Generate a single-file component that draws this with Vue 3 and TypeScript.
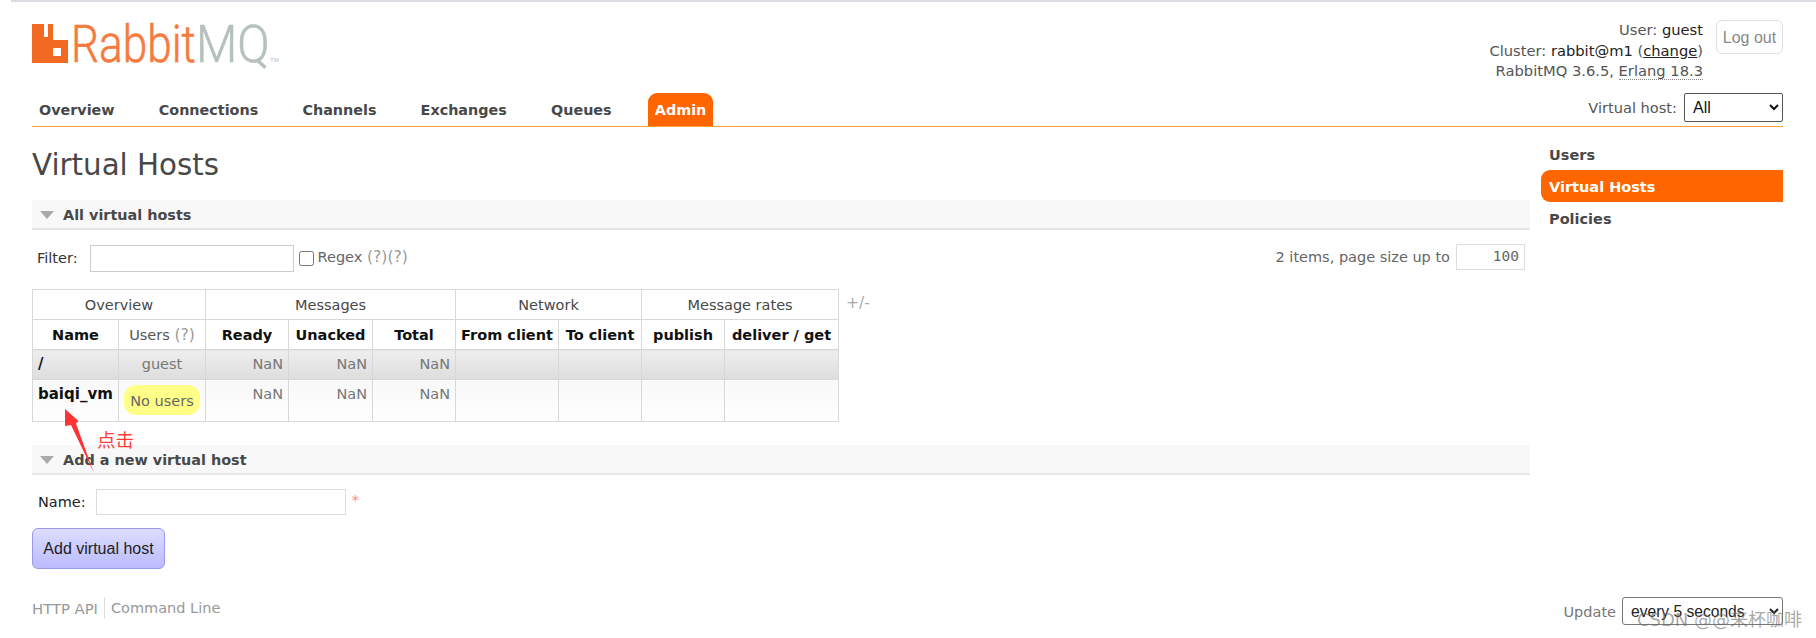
<script setup lang="ts">
const navItems = ['Overview', 'Connections', 'Channels', 'Exchanges', 'Queues', 'Admin']
const groups = [
  { label: 'Overview', span: 2 },
  { label: 'Messages', span: 3 },
  { label: 'Network', span: 2 },
  { label: 'Message rates', span: 2 },
]
const colWidths = [86, 87, 83, 84, 83, 103, 83, 83, 114]
const rows = [
  { name: '/', cls: 'alt1' },
  { name: 'baiqi_vm', cls: 'alt2' },
]
</script>

<template>
  <div class="page">
    <div class="topline"></div>
    <header class="header">
      <div class="logo">
        <svg class="logo-icon" width="36" height="39" viewBox="0 0 36 39">
          <path fill="#f26a22" fill-rule="evenodd" d="M0 0h12v13h4V0h5v16h15v23H0zM21 24v8h8v-8z" />
        </svg>
        <svg class="logo-text" width="206" height="60" viewBox="0 0 206 60">
          <text class="lt rabbit" transform="translate(-4 46) scale(.8 1)" textLength="156" lengthAdjust="spacingAndGlyphs">Rabbit</text>
          <text class="lt mq" transform="translate(121 46) scale(.8 1)" textLength="92" lengthAdjust="spacingAndGlyphs">MQ</text>
          <text x="195" y="46" class="tm">TM</text>
        </svg>
      </div>
      <div class="login">
        <div class="login-text">
          <div>User: <b>guest</b></div>
          <div>Cluster: <b>rabbit@m1</b> (<a class="change">change</a>)</div>
          <div>RabbitMQ 3.6.5, <span class="erlang">Erlang 18.3</span></div>
        </div>
        <button class="logout">Log out</button>
      </div>
    </header>

    <nav class="nav">
      <a v-for="item in navItems" :key="item" class="tab" :class="{ active: item === 'Admin' }">{{ item }}</a>
      <div class="vhost">
        <label>Virtual host:</label>
        <select class="vhost-select"><option>All</option></select>
      </div>
    </nav>

    <div class="body">
      <main class="main">
        <h1>Virtual Hosts</h1>
        <section>
          <h2 class="sec"><i class="tri"></i>All virtual hosts</h2>
          <div class="filter">
            <div class="filter-left">
              <label class="flabel">Filter:</label>
              <input class="finput" type="text" />
              <input class="cb" type="checkbox" />
              <span class="regex">Regex <span class="help">(?)(?)</span></span>
            </div>
            <div class="filter-right">
              <span>2 items, page size up to</span>
              <input class="psize" type="text" value="100" />
            </div>
          </div>
          <div class="table-wrap">
            <table class="list">
              <colgroup>
                <col v-for="(w, i) in colWidths" :key="i" :style="{ width: w + 'px' }" />
              </colgroup>
              <thead>
                <tr class="grp">
                  <th v-for="g in groups" :key="g.label" :colspan="g.span">{{ g.label }}</th>
                </tr>
                <tr class="cols">
                  <th>Name</th>
                  <th class="plain">Users <span class="help">(?)</span></th>
                  <th>Ready</th>
                  <th>Unacked</th>
                  <th>Total</th>
                  <th>From client</th>
                  <th>To client</th>
                  <th>publish</th>
                  <th>deliver / get</th>
                </tr>
              </thead>
              <tbody>
                <tr v-for="r in rows" :key="r.name" :class="r.cls">
                  <td class="name">{{ r.name }}</td>
                  <td class="users">
                    <span v-if="r.cls === 'alt1'">guest</span>
                    <span v-else class="nousers">No users</span>
                  </td>
                  <td class="num">NaN</td>
                  <td class="num">NaN</td>
                  <td class="num">NaN</td>
                  <td></td>
                  <td></td>
                  <td></td>
                  <td></td>
                </tr>
              </tbody>
            </table>
            <span class="plusminus">+/-</span>
          </div>
        </section>

        <section class="add">
          <h2 class="sec"><i class="tri"></i>Add a new virtual host</h2>
          <div class="name-row">
            <label class="nlabel">Name:</label>
            <input class="ninput" type="text" />
            <span class="req">*</span>
          </div>
          <button class="addbtn">Add virtual host</button>
        </section>
      </main>

      <aside class="side">
        <a class="side-item">Users</a>
        <a class="side-item on">Virtual Hosts</a>
        <a class="side-item">Policies</a>
      </aside>
    </div>

    <footer class="footer">
      <div class="links">
        <a class="flink">HTTP API</a>
        <a class="flink sep">Command Line</a>
      </div>
      <div class="update">
        <label>Update</label>
        <select class="upd-select"><option>every 5 seconds</option></select>
      </div>
    </footer>

    <svg class="arrow" width="40" height="70" viewBox="0 0 40 70">
      <path fill="#ff3333" d="M1 2 L14.5 14 L12 16.5 L29.5 65 L7 18 L1 19 Z" />
    </svg>
    <span class="note">点击</span>
    <span class="watermark">CSDN @@来杯咖啡</span>
  </div>
</template>

<style>
html, body { margin: 0; background: #fff; }
</style>

<style scoped>
.page {
  position: relative;
  width: 1816px;
  height: 638px;
  overflow: hidden;
  background: #fff;
  font: 14.5px "DejaVu Sans", Verdana, sans-serif;
  color: #484848;
}
.topline { height: 2px; margin-left: 11px; background: #dcdce4; }
.header {
  display: flex;
  justify-content: space-between;
  height: 91px;
  padding: 0 33px 0 32px;
}
.logo { display: flex; align-items: flex-start; padding-top: 22px; height: 46px; }
.logo-icon { display: block; }
.logo-text { display: block; margin-left: 7px; margin-top: -8px; overflow: visible; }
.lt { font-family: Roboto, sans-serif; font-size: 52px; font-weight: 300; stroke-width: 0.6px; }
.rabbit { fill: #f47b3c; stroke: #f47b3c; }
.mq { fill: #b4c1bc; stroke: #b4c1bc; }
.tm { font: 6px "Liberation Sans", sans-serif; fill: #b5c0bc; }
.login { display: flex; align-items: flex-start; padding-top: 18px; }
.login-text { text-align: right; line-height: 20.5px; margin-right: 13px; margin-top: 0; color: #555; font-size: 14.7px; }
.login-text b { font-weight: 400; color: #222; }
.change { color: #222; text-decoration: underline; }
.erlang { border-bottom: 1px dotted #888; }
.logout {
  width: 67px;
  height: 34px;
  padding: 1px 0 0;
  background: #fff;
  border: 1px solid #e0e0e0;
  border-radius: 6px;
  color: #888;
  font: 16px "Liberation Sans", Arial, sans-serif;
}
.nav {
  display: flex;
  align-items: flex-end;
  height: 33px;
  margin: 0 33px 0 32px;
  border-bottom: 1px solid #ffa033;
  position: relative;
}
.tab {
  height: 33px;
  line-height: 34px;
  padding: 0 7px;
  margin-right: 30.2px;
  font-weight: 700;
  font-size: 14.35px;
  color: #484848;
  border-radius: 9px 9px 0 0;
}
.tab.active { background: #f60; color: #fff; margin-left: -1px; }
.vhost { margin-left: auto; display: flex; align-items: flex-start; height: 33px; color: #555; }
.vhost label { margin-right: 7px; line-height: 30px; font-size: 14.6px; }
.vhost-select {
  width: 99px;
  height: 29px;
  padding-left: 4px;
  font: 16px "Liberation Sans", Arial, sans-serif;
  background: #fff;
  color: #111;
  border: 1px solid #555;
  border-radius: 2px;
}
.body { display: flex; padding-left: 32px; }
.main { width: 1498px; }
h1 {
  margin: 0;
  height: 73px;
  padding-top: 18px;
  box-sizing: border-box;
  font-size: 29.3px;
  line-height: 40px;
  font-weight: 400;
  color: #484848;
}
.sec {
  display: flex;
  align-items: center;
  height: 26px;
  padding-top: 2px;
  margin: 0;
  background: #f8f8f8;
  border-bottom: 2px solid #e6e6e6;
  font-size: 14.4px;
  font-weight: 700;
  color: #484848;
}
.tri {
  width: 0;
  height: 0;
  margin: 0 9px 0 8px;
  border-left: 7px solid transparent;
  border-right: 7px solid transparent;
  border-top: 8px solid #aaa;
}
.filter {
  display: flex;
  justify-content: space-between;
  align-items: flex-start;
  height: 59px;
  padding-top: 14px;
  box-sizing: border-box;
}
.filter-left { display: flex; align-items: center; height: 28px; }
.flabel { margin-left: 5px; margin-right: 12px; color: #333; }
.finput {
  width: 204px;
  height: 27px;
  padding: 0;
  box-sizing: border-box;
  border: 1px solid #ccc;
  background: #fff;
}
.cb { width: 15px; height: 15px; margin: 1px 4px 0 5px; }
.regex { color: #666; margin-top: -3px; }
.help { color: #999; font-size: 15.6px; }
.filter-right { display: flex; align-items: center; height: 26px; margin-right: 5px; color: #666; }
.psize {
  width: 69px;
  height: 26px;
  margin-left: 6px;
  padding: 0 5px 3px;
  box-sizing: border-box;
  border: 1px solid #ddd;
  background: #fff;
  text-align: right;
  font: 14.5px "DejaVu Sans Mono", monospace;
  color: #666;
}
.table-wrap { display: flex; align-items: flex-start; }
.list {
  border-collapse: collapse;
  table-layout: fixed;
  width: 806px;
  font-size: 14.5px;
}
.list th, .list td { border: 1px solid #d8d8d8; padding: 0; }
.grp th { height: 29px; font-weight: 400; color: #484848; background: #fff; }
.cols th { height: 29px; font-weight: 700; color: #111; background: #fff; white-space: nowrap; }
.cols th.plain { font-weight: 400; color: #555; }
.alt1 td { background: linear-gradient(#eee, #ddd); height: 29px; }
.alt2 td { background: linear-gradient(#f8f8f8, #fff); height: 41px; }
td.name { font-weight: 700; font-size: 15px; color: #111; padding-left: 5px; vertical-align: top; line-height: 29px; }
td.users { text-align: center; color: #777; vertical-align: top; line-height: 29px; }
.nousers {
  display: inline-block;
  width: 76px;
  height: 30px;
  margin-top: 5px;
  line-height: 32px;
  background: #ff8;
  border-radius: 12px;
  color: #666;
}
td.num { text-align: right; color: #777; padding-right: 5px; vertical-align: top; line-height: 29px; }
.plusminus { margin-left: 7px; margin-top: 5px; color: #aaa; font-size: 15.6px; }
.add { margin-top: 23px; }
.name-row { display: flex; align-items: center; height: 26px; margin-top: 14px; }
.nlabel { margin-left: 6px; margin-right: 10px; color: #222; }
.ninput {
  width: 250px;
  height: 26px;
  padding: 0;
  box-sizing: border-box;
  border: 1px solid #ddd;
  background: #fff;
}
.req { margin-left: 6px; color: #f88; margin-top: -5px; }
.addbtn {
  display: block;
  width: 133px;
  height: 41px;
  margin-top: 13px;
  padding: 0;
  background: linear-gradient(#ddf, #bbf);
  border: 1px solid #99e;
  border-radius: 6px;
  color: #222;
  font: 16px "Liberation Sans", Arial, sans-serif;
}
.side { width: 242px; margin-left: 11px; padding-top: 11px; display: flex; flex-direction: column; }
.side-item { height: 32px; line-height: 34px; padding-left: 8px; font-weight: 700; font-size: 14.5px; color: #484848; }
.side-item.on { background: #f60; color: #fff; border-radius: 9px 0 0 9px; }
.footer {
  display: flex;
  justify-content: space-between;
  align-items: flex-start;
  margin: 28px 33px 0 32px;
  height: 28px;
  color: #999;
}
.links { display: flex; align-items: center; height: 22px; }
.flink { color: #999; font-size: 14.8px; }
.sep { margin-left: 6px; padding-left: 6px; border-left: 1px solid #ddd; line-height: 22px; font-size: 14.5px; }
.update { display: flex; align-items: center; color: #777; }
.update label { margin-right: 6px; padding-top: 2px; }
.upd-select {
  width: 161px;
  height: 28px;
  padding-left: 4px;
  font: 15.6px "Liberation Sans", Arial, sans-serif;
  background: #fff;
  color: #222;
  border: 1px solid #777;
  border-radius: 3px;
}
.arrow { position: absolute; left: 64px; top: 407px; }
.note {
  position: absolute;
  left: 97px;
  top: 427px;
  font: 18.5px/24px "Noto Sans CJK SC", sans-serif;
  color: #ff3b3b;
}
.watermark {
  position: absolute;
  left: 1637px;
  top: 609px;
  font: 18px/22px "DejaVu Sans", "Noto Sans CJK SC", sans-serif;
  color: rgba(110, 110, 110, 0.6);
  white-space: nowrap;
}
</style>
